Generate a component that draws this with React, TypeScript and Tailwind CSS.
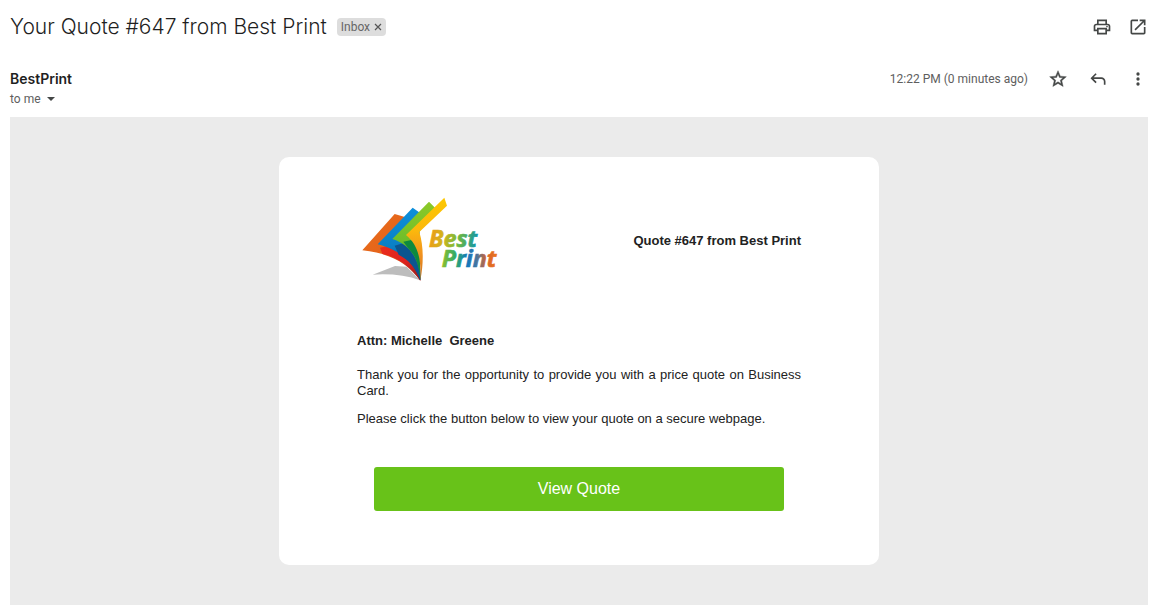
import type { ReactNode } from 'react';

interface IconButtonProps {
  label: string;
  children: ReactNode;
}

function IconButton({ label, children }: IconButtonProps) {
  return (
    <button type="button" aria-label={label} title={label} className="size-5 text-[#444746]">
      <svg viewBox="0 0 24 24" className="size-5" fill="currentColor" aria-hidden="true">
        {children}
      </svg>
    </button>
  );
}

function BestPrintLogo() {
  return (
    <svg
      viewBox="36 36 414 255"
      className="h-[85px] w-[138px]"
      role="img"
      aria-label="Best Print"
    >
      <defs>
        <linearGradient id="orange" x1="0" y1="0" x2="1" y2="1">
          <stop offset="0" stopColor="#e8701a" />
          <stop offset="0.6" stopColor="#e5601c" />
          <stop offset="1" stopColor="#b92a1e" />
        </linearGradient>
        <linearGradient id="red" x1="0" y1="0" x2="1" y2="1">
          <stop offset="0" stopColor="#ee2f1c" />
          <stop offset="0.6" stopColor="#dc221f" />
          <stop offset="1" stopColor="#8e1c1c" />
        </linearGradient>
        <linearGradient id="blue" x1="0" y1="0" x2="0" y2="1">
          <stop offset="0" stopColor="#0d8fdc" />
          <stop offset="0.55" stopColor="#0a7fc4" />
          <stop offset="1" stopColor="#073f66" />
        </linearGradient>
        <linearGradient id="green" x1="0" y1="0" x2="0" y2="1">
          <stop offset="0" stopColor="#8cc928" />
          <stop offset="0.5" stopColor="#6fbe2a" />
          <stop offset="1" stopColor="#037a35" />
        </linearGradient>
        <linearGradient id="yellow" x1="0" y1="0" x2="0" y2="1">
          <stop offset="0" stopColor="#fcc803" />
          <stop offset="0.4" stopColor="#fbb80c" />
          <stop offset="0.7" stopColor="#f09021" />
          <stop offset="1" stopColor="#c9701c" />
        </linearGradient>
        <linearGradient id="best" gradientUnits="userSpaceOnUse" x1="238" y1="150" x2="380" y2="170">
          <stop offset="0" stopColor="#ee9b17" />
          <stop offset="0.3" stopColor="#d0b51c" />
          <stop offset="0.6" stopColor="#72b93b" />
          <stop offset="1" stopColor="#1597a4" />
        </linearGradient>
        <linearGradient id="print" gradientUnits="userSpaceOnUse" x1="275" y1="220" x2="445" y2="220">
          <stop offset="0" stopColor="#8fc02b" />
          <stop offset="0.25" stopColor="#2fa96b" />
          <stop offset="0.45" stopColor="#1277bd" />
          <stop offset="0.6" stopColor="#3b76a5" />
          <stop offset="0.8" stopColor="#d9622a" />
          <stop offset="1" stopColor="#ee7a1c" />
        </linearGradient>
      </defs>
      <path d="M68 269 L135 243 L170 245 L210 286 Q150 264 68 269Z" fill="#bdbdbd" />
      <path
        d="M37 196 L134 87 L172 98 L208 141 L211 287 C176 240 130 206 37 196Z"
        fill="url(#orange)"
      />
      <path d="M90 188 L208 160 L211 287 C180 244 145 218 97 207Z" fill="url(#red)" />
      <path d="M83 178 L188 68 L216 88 L208 141 L211 286 C192 236 155 196 83 178Z" fill="url(#blue)" />
      <path d="M134 182 L208 160 L211 286 C196 246 178 226 146 209Z" fill="#0a5590" />
      <path d="M127 162 L237 50 L255 68 L208 141 L211 285 C208 226 184 180 127 162Z" fill="url(#green)" />
      <path d="M160 170 L208 160 L211 285 C207 236 196 210 176 191Z" fill="#0d8a3e" />
      <path
        d="M168 150 L283 38 L291 62 L208 141 C220 180 222 230 211 286 C214 220 204 180 168 150Z"
        fill="url(#yellow)"
      />
      <text
        fontFamily="'Open Sans', 'Noto Sans', sans-serif"
        fontSize="70"
        fontWeight="700"
        fontStyle="italic"
      >
        <tspan x="237" y="187" fill="url(#best)" stroke="url(#best)" strokeWidth="2">
          Best
        </tspan>
        <tspan x="275" y="246" fill="url(#print)" stroke="url(#print)" strokeWidth="2">
          Print
        </tspan>
      </text>
    </svg>
  );
}

function SubjectBar() {
  return (
    <div className="flex h-8 items-center justify-between">
      <div className="flex items-center gap-2.5">
        <h1 className="text-[21px] leading-7 font-light text-[#1f1f1f]">Your Quote #647 from Best Print</h1>
        <span className="flex h-[18px] items-center gap-1 rounded bg-[#dddddd] px-1 font-[Roboto,sans-serif] text-xs text-[#666666]">
          Inbox
          <button type="button" aria-label="Remove label Inbox" className="flex size-2 items-center justify-center">
            <svg viewBox="0 0 8 8" className="size-2" stroke="#555555" strokeWidth="1.2" aria-hidden="true">
              <path d="M1 1 L7 7 M7 1 L1 7" />
            </svg>
          </button>
        </span>
      </div>
      <div className="flex items-center gap-4">
        <IconButton label="Print all">
          <path d="M19 8h-1V3H6v5H5c-1.66 0-3 1.34-3 3v6h4v4h12v-4h4v-6c0-1.66-1.34-3-3-3zM8 5h8v3H8V5zm8 14H8v-4h8v4zm2-4v-2H6v2H4v-4c0-.55.45-1 1-1h14c.55 0 1 .45 1 1v4h-2z" />
          <circle cx="18" cy="11.5" r="1" />
        </IconButton>
        <IconButton label="In new window">
          <path d="M19 19H5V5h7V3H5a2 2 0 0 0-2 2v14a2 2 0 0 0 2 2h14c1.1 0 2-.9 2-2v-7h-2v7zM14 3v2h3.59l-9.83 9.83 1.41 1.41L19 6.41V10h2V3h-7z" />
        </IconButton>
      </div>
    </div>
  );
}

function SenderBar() {
  return (
    <div className="flex items-start justify-between">
      <div>
        <p className="text-sm leading-5 font-semibold text-[#1f1f1f]">BestPrint</p>
        <button type="button" className="flex h-5 items-center gap-1.5 font-[Roboto,sans-serif] text-xs text-[#5e5e5e]">
          to me
          <svg viewBox="0 0 8 4" className="h-1 w-2" fill="#444746" aria-hidden="true">
            <path d="M0 0h8L4 4z" />
          </svg>
        </button>
      </div>
      <div className="flex h-5 items-center gap-5">
        <time className="font-[Roboto,sans-serif] text-xs text-[#5e5e5e]">12:22 PM (0 minutes ago)</time>
        <IconButton label="Star">
          <path
            d="M22 9.24l-7.19-.62L12 2 9.19 8.63 2 9.24l5.46 4.73L5.82 21 12 17.27 18.18 21l-1.63-7.03L22 9.24zM12 15.4l-3.76 2.27 1-4.28-3.32-2.88 4.38-.38L12 6.1l1.71 4.04 4.38.38-3.32 2.88 1 4.28L12 15.4z"
            stroke="currentColor"
            strokeWidth="0.5"
          />
        </IconButton>
        <IconButton label="Reply">
          <path d="M19 19v-4c0-1.66-1.34-3-3-3H6.83l3.58 3.59L9 17l-6-6 6-6 1.41 1.41L6.83 10H16c2.76 0 5 2.24 5 5v4h-2z" />
        </IconButton>
        <IconButton label="More">
          <circle cx="12" cy="6" r="2" />
          <circle cx="12" cy="12" r="2" />
          <circle cx="12" cy="18" r="2" />
        </IconButton>
      </div>
    </div>
  );
}

function QuoteCard() {
  return (
    <article className="mx-auto max-w-[600px] rounded-[10px] bg-white px-[78px] pt-10 pb-[54px] font-['Liberation_Sans',Arial,sans-serif] text-[13px] leading-4 text-[#222222]">
      <div className="flex h-[88px] items-center justify-between pl-[5px]">
        <div className="self-start">
          <BestPrintLogo />
        </div>
        <h2 className="font-bold">Quote #647 from Best Print</h2>
      </div>
      <p className="mt-12 font-bold whitespace-pre-wrap">Attn: Michelle  Greene</p>
      <p className="mt-[18px] text-justify">
        Thank you for the opportunity to provide you with a price quote on Business Card.
      </p>
      <p className="mt-3">Please click the button below to view your quote on a secure webpage.</p>
      <a
        href="#quote"
        className="mx-[17px] mt-10 flex h-11 items-center justify-center rounded-[3px] bg-[#68c219] text-base text-white"
      >
        View Quote
      </a>
    </article>
  );
}

export default function App() {
  return (
    <main className="min-h-screen bg-white pt-[11px] pr-[3px] pb-1 pl-2.5 font-[Inter,sans-serif]">
      <header>
        <SubjectBar />
        <div className="mt-[26px]">
          <SenderBar />
        </div>
      </header>
      <section className="mt-2 bg-[#ebebeb] py-10">
        <QuoteCard />
      </section>
    </main>
  );
}
